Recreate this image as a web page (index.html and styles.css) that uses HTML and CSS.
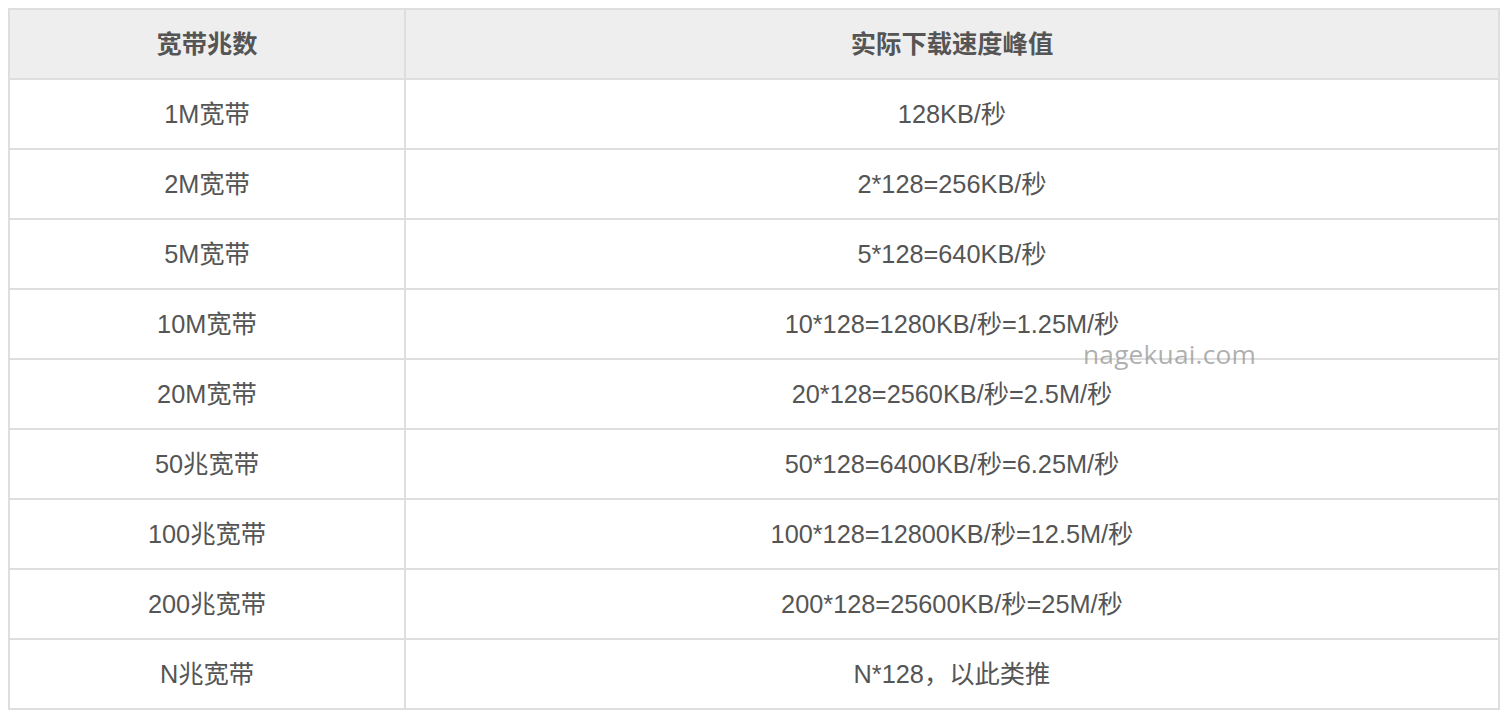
FILE: index.html
```html
<!DOCTYPE html>
<html lang="zh-CN">
<head>
<meta charset="utf-8">
<link rel="stylesheet" href="styles.css">
</head>
<body>
<div class="wrap">
<table class="speed">
<thead>
<tr><th class="c1">宽带兆数</th><th class="c2">实际下载速度峰值</th></tr>
</thead>
<tbody>
<tr><td>1M宽带</td><td>128KB/秒</td></tr>
<tr><td>2M宽带</td><td>2*128=256KB/秒</td></tr>
<tr><td>5M宽带</td><td>5*128=640KB/秒</td></tr>
<tr><td>10M宽带</td><td>10*128=1280KB/秒=1.25M/秒</td></tr>
<tr><td>20M宽带</td><td>20*128=2560KB/秒=2.5M/秒</td></tr>
<tr><td>50兆宽带</td><td>50*128=6400KB/秒=6.25M/秒</td></tr>
<tr><td>100兆宽带</td><td>100*128=12800KB/秒=12.5M/秒</td></tr>
<tr><td>200兆宽带</td><td>200*128=25600KB/秒=25M/秒</td></tr>
<tr><td>N兆宽带</td><td>N*128，以此类推</td></tr>
</tbody>
</table>
<div class="watermark">nagekuai.com</div>
</div>
</body>
</html>
```
FILE: styles.css
```css
html, body {
  margin: 0;
  padding: 0;
  background: #fff;
}
body {
  padding: 8px;
  font-family: "Liberation Sans", "Noto Sans CJK SC", sans-serif;
  color: #555;
}
.wrap {
  position: relative;
  width: 1492px;
}
.speed {
  width: 1492px;
  border-collapse: collapse;
  table-layout: fixed;
  font-size: 25.3px;
}
.speed th, .speed td {
  border: 2px solid #dedede;
  height: 70px;
  padding: 0 0 4px;
  text-align: center;
  vertical-align: middle;
  box-sizing: border-box;
}
.speed th {
  background: #eeeeee;
  font-weight: bold;
  color: #555;
}
.c1 { width: 396px; }
.watermark {
  position: absolute;
  left: 1075px;
  top: 328px;
  font-family: "Open Sans", "Noto Sans", sans-serif;
  font-size: 26.3px;
  line-height: 36px;
  color: rgba(150, 150, 150, 0.75);
  letter-spacing: 0.2px;
}
```
